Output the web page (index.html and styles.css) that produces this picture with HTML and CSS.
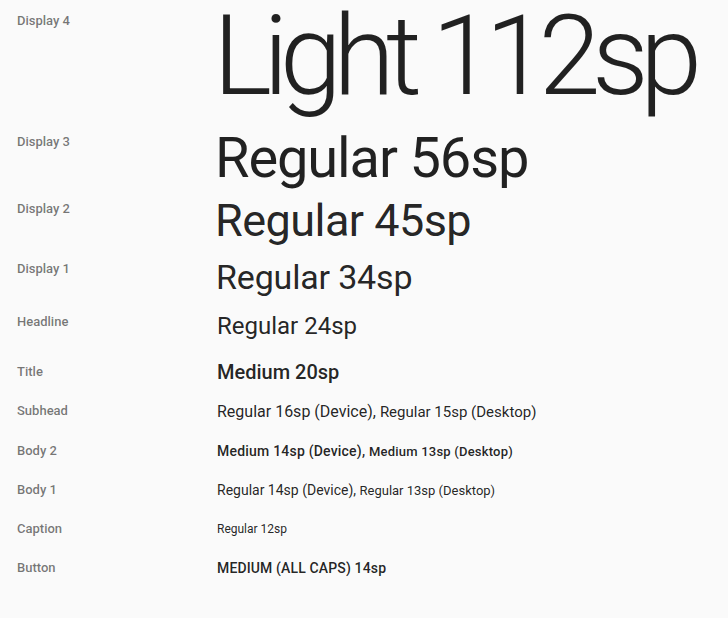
FILE: index.html
```html
<!DOCTYPE html>
<html lang="en">
<head>
    <meta charset="UTF-8">
    <meta name="viewport" content="width=device-width, initial-scale=1.0">
    <title>Type scale</title>
    <link rel="stylesheet" href="styles.css">
</head>
<body>

    <div class="type-scale">
        <div class="row row-display4">
            <div class="label">Display 4</div>
            <div class="sample display4">Light 112sp</div>
        </div>
        <div class="row row-display3">
            <div class="label">Display 3</div>
            <div class="sample display3">Regular 56sp</div>
        </div>
        <div class="row row-display2">
            <div class="label">Display 2</div>
            <div class="sample display2">Regular 45sp</div>
        </div>
        <div class="row row-display1">
            <div class="label">Display 1</div>
            <div class="sample display1">Regular 34sp</div>
        </div>
        <div class="row row-headline">
            <div class="label">Headline</div>
            <div class="sample headline">Regular 24sp</div>
        </div>

        <div class="row row-small row-title">
            <div class="label">Title</div>
            <div class="sample title">Medium 20sp</div>
        </div>
        <div class="row row-small">
            <div class="label">Subhead</div>
            <div class="sample subhead">Regular 16sp (Device), <span class="desktop">Regular 15sp (Desktop)</span></div>
        </div>
        <div class="row row-small">
            <div class="label">Body 2</div>
            <div class="sample body2">Medium 14sp (Device), <span class="desktop">Medium 13sp (Desktop)</span></div>
        </div>
        <div class="row row-small">
            <div class="label">Body 1</div>
            <div class="sample body1">Regular 14sp (Device), <span class="desktop">Regular 13sp (Desktop)</span></div>
        </div>
        <div class="row row-small">
            <div class="label">Caption</div>
            <div class="sample caption">Regular 12sp</div>
        </div>
        <div class="row row-small">
            <div class="label">Button</div>
            <div class="sample button">MEDIUM (ALL CAPS) 14sp</div>
        </div>
    </div>

</body>
</html>
```

FILE: styles.css
```css
body {
    margin: 0;
    padding: 0;
    font-family: 'Roboto', sans-serif;
    background: #fafafa;
    color: rgba(0, 0, 0, 0.87);
}

.type-scale {
    padding-left: 17px;
}

.row {
    display: flex;
    align-items: flex-start;
}

.label {
    width: 200px;
    flex-shrink: 0;
    font-size: 13px;
    font-weight: 500;
    line-height: 1;
    color: rgba(0, 0, 0, 0.54);
}

.sample {
    line-height: 1;
    white-space: nowrap;
}

/* display rows: label lines up with the cap height of the sample */
.row-display4 .label { margin-top: 14px; }
.row-display3 { margin-top: 12px; }
.row-display3 .label { margin-top: 5px; }
.row-display2 { margin-top: 12px; }
.row-display2 .label { margin-top: 4px; }
.row-display1 { margin-top: 17px; }
.row-display1 .label { margin-top: 2px; }
.row-headline { margin-top: 20px; }
.row-headline .label { margin-top: 1px; }

.display4 {
    font-size: 112px;
    font-weight: 300;
    letter-spacing: -0.078em;
    margin-left: -4px;
    padding: 0 10px 6px 0;
}

.display3 {
    font-size: 56px;
    letter-spacing: -0.02em;
    margin-left: -2px;
}

.display2 {
    font-size: 45px;
    letter-spacing: -0.012em;
    margin-left: -2px;
}

.display1 {
    font-size: 34px;
    letter-spacing: -0.005em;
    margin-left: -1px;
}

.headline {
    font-size: 24px;
}

/* smaller styles sit on an even 39px rhythm */
.row-title {
    margin-top: 15px;
}

.row-small .label,
.row-small .sample {
    line-height: 39px;
}

.row-small .label {
    margin-top: -1px;
}

.title {
    font-size: 20px;
    font-weight: 500;
}

.subhead {
    font-size: 16px;
}

.subhead .desktop {
    font-size: 15px;
}

.body2 {
    font-size: 14px;
    font-weight: 500;
    letter-spacing: 0.015em;
}

.body1 {
    font-size: 14px;
}

.body2 .desktop,
.body1 .desktop {
    font-size: 13px;
}

.caption {
    font-size: 12px;
}

.button {
    font-size: 14px;
    font-weight: 500;
    letter-spacing: 0.01em;
}
```
